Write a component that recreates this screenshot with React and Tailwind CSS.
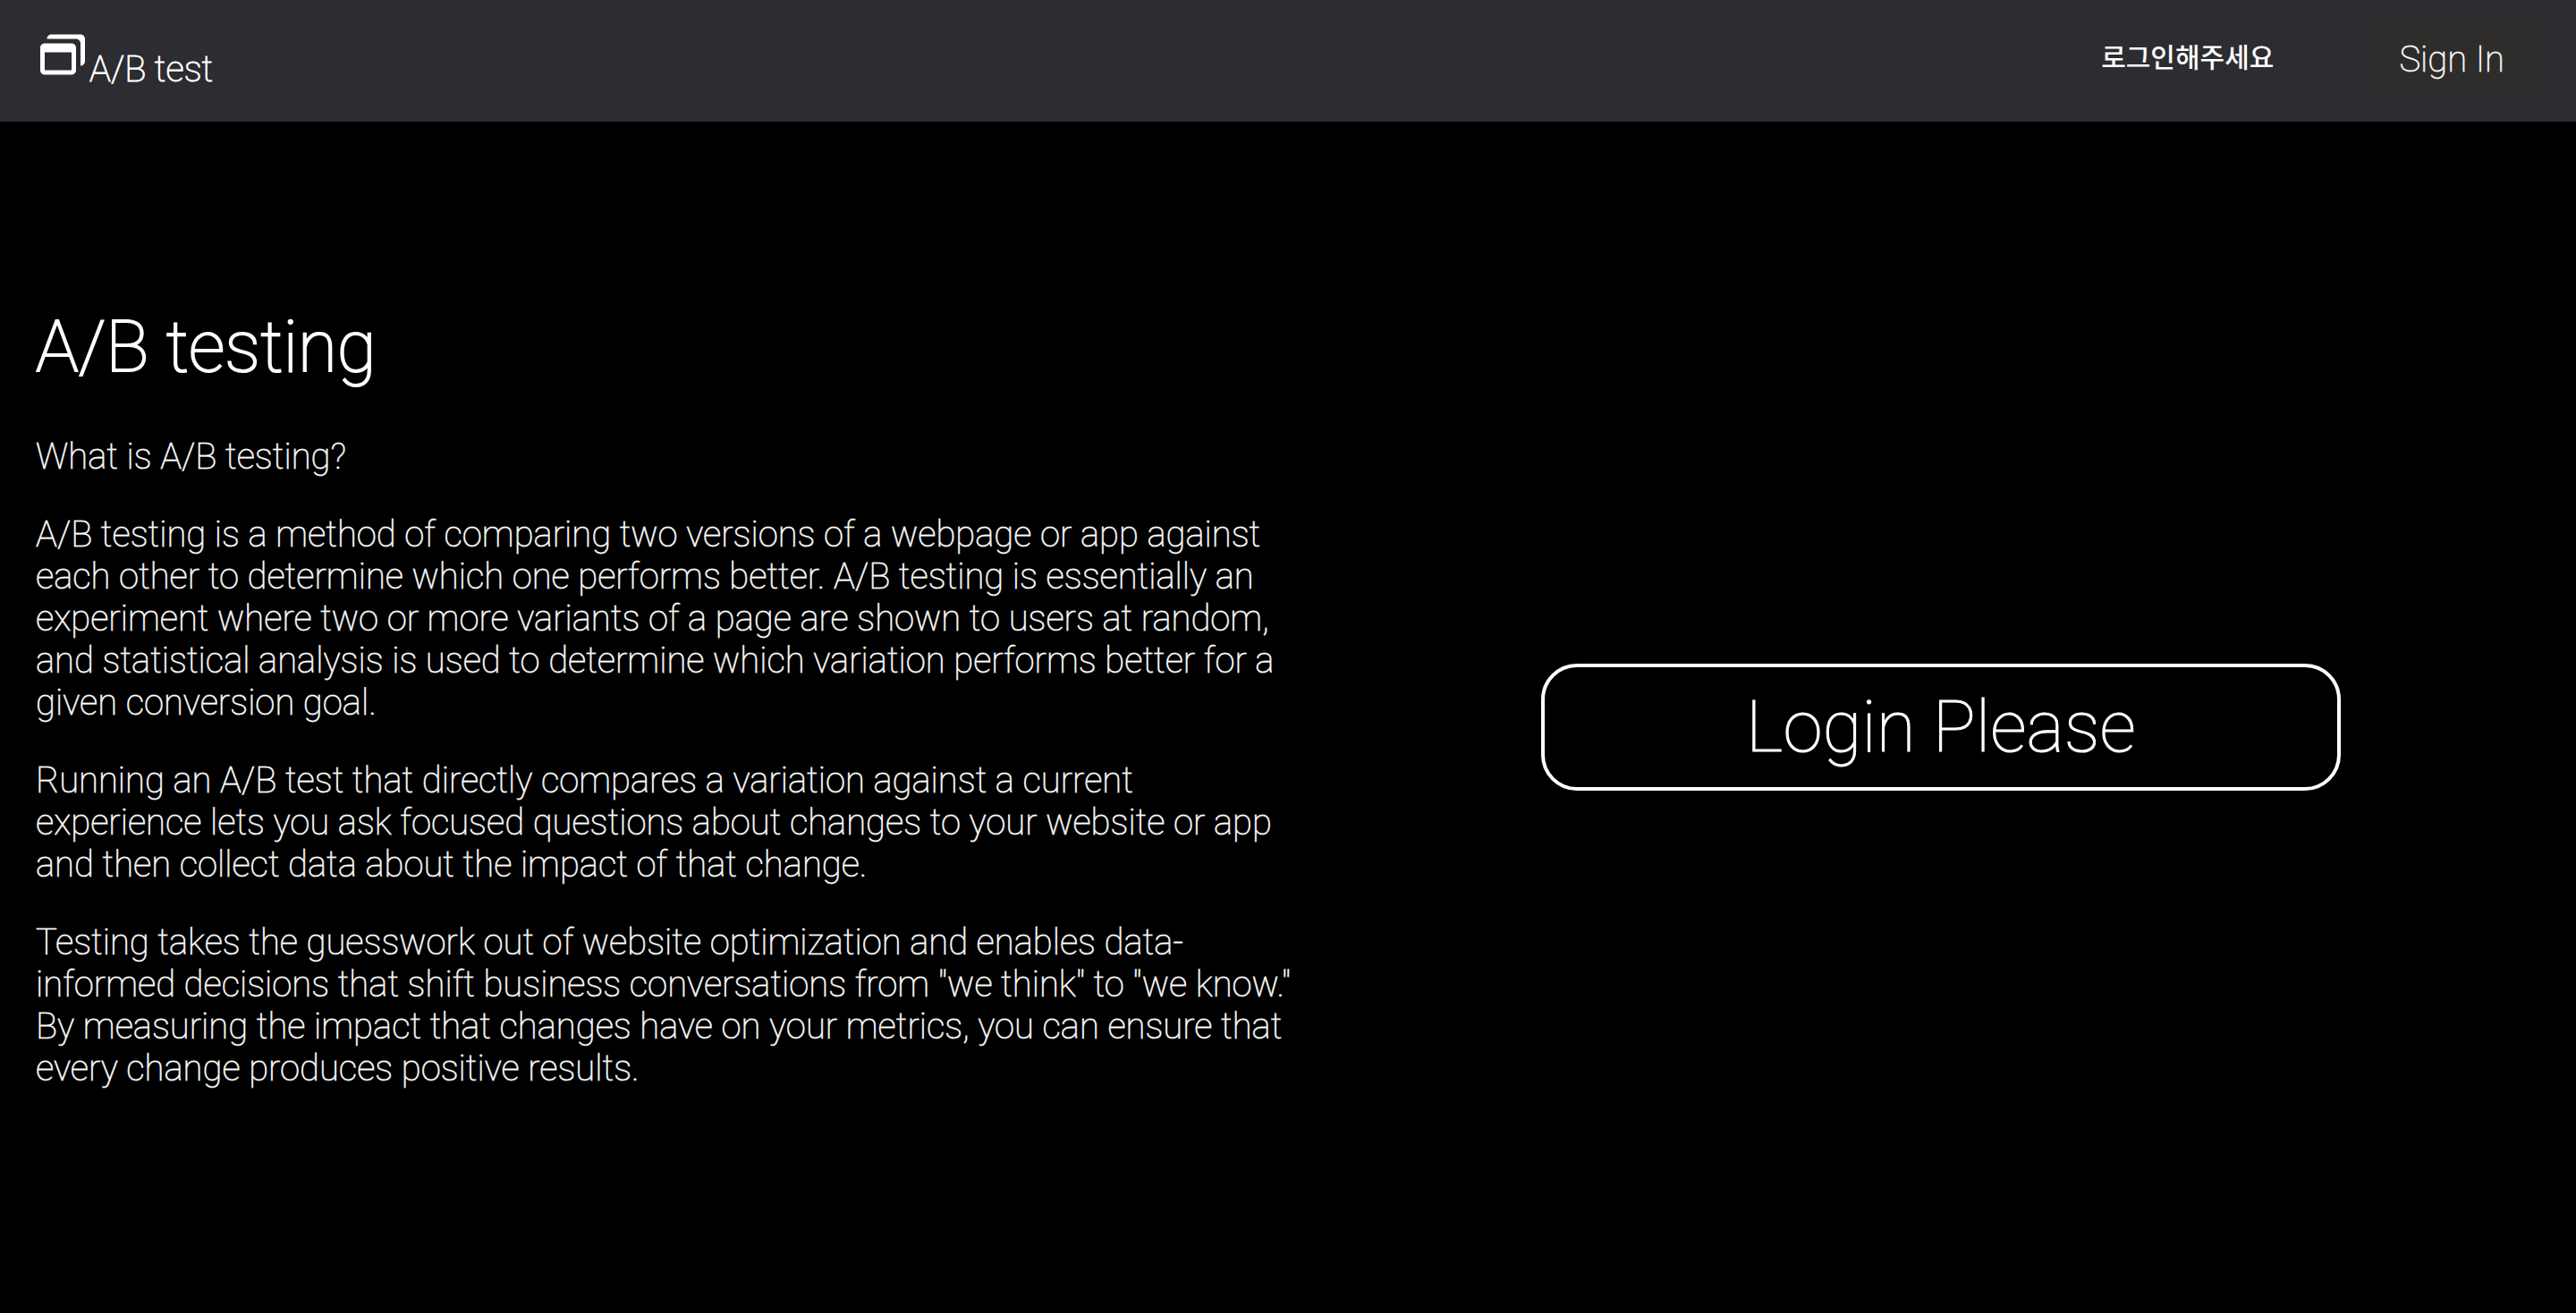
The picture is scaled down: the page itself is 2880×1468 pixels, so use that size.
import { BiWindows } from "react-icons/bi";

const paragraphs = [
  "What is A/B testing?",
  "A/B testing is a method of comparing two versions of a webpage or app against each other to determine which one performs better. A/B testing is essentially an experiment where two or more variants of a page are shown to users at random, and statistical analysis is used to determine which variation performs better for a given conversion goal.",
  "Running an A/B test that directly compares a variation against a current experience lets you ask focused questions about changes to your website or app and then collect data about the impact of that change.",
  "Testing takes the guesswork out of website optimization and enables data-informed decisions that shift business conversations from \"we think\" to \"we know.\" By measuring the impact that changes have on your metrics, you can ensure that every change produces positive results.",
];

function Header() {
  return (
    <header className="flex h-[136px] items-center justify-between bg-[#2d2c31] px-10 pb-1">
      <a href="#" className="flex items-baseline [-webkit-text-stroke:1px_#ffffff]">
        <BiWindows className="size-[60px]" aria-hidden="true" />
        A/B test
      </a>
      <div className="flex items-center gap-[100px]">
        <span className="pb-2 font-['Noto_Sans_CJK_KR',sans-serif] text-[30px] leading-[40px] font-medium [-webkit-text-stroke:0]">
          로그인해주세요
        </span>
        <button type="button" className="bg-[#2e2d2b] px-10 py-5">
          Sign In
        </button>
      </div>
    </header>
  );
}

export default function App() {
  return (
    <div className="flex min-h-screen flex-col bg-black font-['Roboto',sans-serif] text-[40px] leading-[47px] font-thin text-white antialiased [-webkit-text-stroke:1px_#ffffffb3]">
      <Header />
      <main className="grid flex-1 grid-cols-2 pl-10">
        <section className="pt-[205px]">
          <h1 className="mb-[52px] text-[80px] leading-[94px] [-webkit-text-stroke:2px_#ffffff]">
            A/B testing
          </h1>
          {paragraphs.map((text) => (
            <p key={text} className="mb-10">
              {text}
            </p>
          ))}
        </section>
        <section className="flex items-center justify-center pt-[22px]">
          <button
            type="button"
            className="w-[63%] rounded-[40px] border-4 border-white py-5 text-[80px] leading-[94px] [-webkit-text-stroke:1px_#ffffff]"
          >
            Login Please
          </button>
        </section>
      </main>
    </div>
  );
}
